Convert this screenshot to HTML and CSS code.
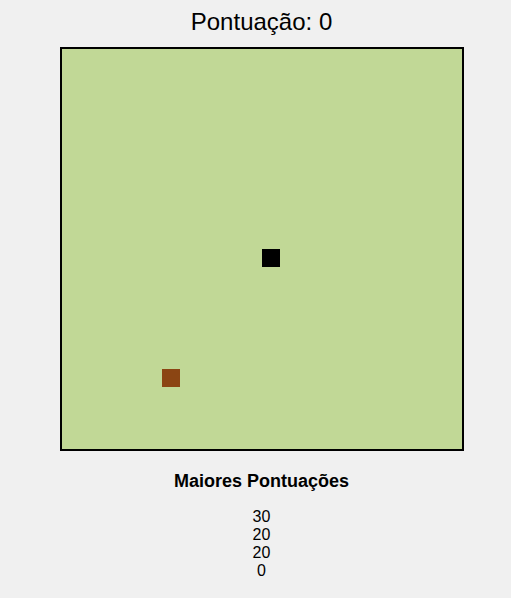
FILE: index.html
```html
<!doctype html>
<html lang="pt">
<head>
    <meta charset="UTF-8">
    <meta name="viewport" content="width=device-width, initial-scale=1.0">
    <title>Snake</title>
    <link rel="stylesheet" href="styles.css">
</head>
<body>
    <div class="game">
        <div class="score">Pontuação: <span id="score">0</span></div>
        <div class="board">
            <div class="cell snake" style="left: 200px; top: 200px"></div>
            <div class="cell food" style="left: 100px; top: 320px"></div>
        </div>
        <div class="ranking">
            <div class="ranking-title">Maiores Pontuações</div>
            <div class="ranking-list">
                <div>30</div>
                <div>20</div>
                <div>20</div>
                <div>0</div>
            </div>
        </div>
    </div>
</body>
</html>
```
FILE: styles.css
```css
html , body
{
    margin : 0px ;
    padding : 0px ;
    background : #f0f0f0 ;
    font-family : "Liberation Sans" , Arial , sans-serif ;
    color : #000 ;
}
.game
{
    display : flex ;
    flex-direction : column ;
    align-items : center ;
    padding : 8px 0 0 12px ;
}
.score
{
    font-size : 24px ;
    margin-bottom : 11px ;
}
.board
{
    position : relative ;
    width : 400px ;
    height : 400px ;
    border : 2px solid #000 ;
    background : #c1d896 ;
}
.cell
{
    position : absolute ;
    width : 18px ;
    height : 18px ;
}
.snake
{
    background : #000 ;
}
.food
{
    background : #8b4513 ;
}
.ranking
{
    display : flex ;
    flex-direction : column ;
    align-items : center ;
    margin-top : 20px ;
}
.ranking-title
{
    font-size : 18px ;
    font-weight : bold ;
    margin-bottom : 16px ;
}
.ranking-list
{
    font-size : 16px ;
    line-height : 18px ;
    text-align : center ;
}
```
